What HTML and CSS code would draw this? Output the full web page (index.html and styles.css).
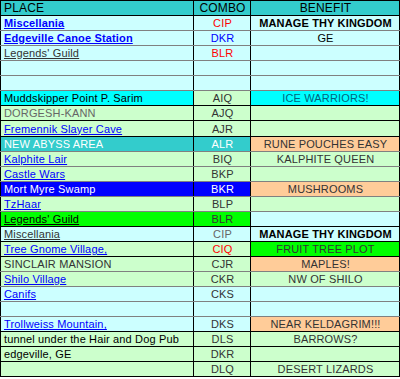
FILE: index.html
```html
<!DOCTYPE html>
<html>
<head>
<meta charset="utf-8">
<link rel="stylesheet" href="styles.css">
</head>
<body>
<table class="sheet">
  <colgroup><col class="c-place"><col class="c-combo"><col class="c-benefit"></colgroup>
  <tr class="hdr bk"><td class="place">PLACE</td><td class="combo">COMBO</td><td class="benefit">BENEFIT</td></tr>
  <tr class="cy gr"><td class="place"><span class="lnk b">Miscellania</span></td><td class="combo red">CIP</td><td class="benefit b dark">MANAGE THY KINGDOM</td></tr>
  <tr class="cy gr"><td class="place"><span class="lnk b">Edgeville Canoe Station</span></td><td class="combo blue">DKR</td><td class="benefit dark">GE</td></tr>
  <tr class="cy gr"><td class="place"><span class="ul">Legends' Guild</span></td><td class="combo red">BLR</td><td class="benefit"></td></tr>
  <tr class="cy gr"><td class="place"></td><td class="combo"></td><td class="benefit"></td></tr>
  <tr class="cy gr"><td class="place"></td><td class="combo"></td><td class="benefit"></td></tr>
  <tr class="gn bk"><td class="place aq dark">Muddskipper Point P. Sarim</td><td class="combo">AIQ</td><td class="benefit aq teal">ICE WARRIORS!</td></tr>
  <tr class="gn bk"><td class="place mid">DORGESH-KANN</td><td class="combo">AJQ</td><td class="benefit"></td></tr>
  <tr class="gn bk tall"><td class="place"><span class="lnk">Fremennik Slayer Cave</span></td><td class="combo">AJR</td><td class="benefit"></td></tr>
  <tr class="gn gr"><td class="place tl wt">NEW ABYSS AREA</td><td class="combo tl wt">ALR</td><td class="benefit or">RUNE POUCHES EASY</td></tr>
  <tr class="gn gr"><td class="place"><span class="lnk">Kalphite Lair</span></td><td class="combo">BIQ</td><td class="benefit">KALPHITE QUEEN</td></tr>
  <tr class="gn gr"><td class="place"><span class="lnk">Castle Wars</span></td><td class="combo">BKP</td><td class="benefit"></td></tr>
  <tr class="gn gr"><td class="place bl wt">Mort Myre Swamp</td><td class="combo bl wt">BKR</td><td class="benefit or">MUSHROOMS</td></tr>
  <tr class="gn gr"><td class="place"><span class="lnk">TzHaar</span></td><td class="combo">BLP</td><td class="benefit"></td></tr>
  <tr class="gn bk"><td class="place lg"><span class="ul dark">Legends' Guild</span></td><td class="combo lg">BLR</td><td class="benefit lc"></td></tr>
  <tr class="cy bk"><td class="place"><span class="ul">Miscellania</span></td><td class="combo mid">CIP</td><td class="benefit b dark">MANAGE THY KINGDOM</td></tr>
  <tr class="gn bk"><td class="place"><span class="lnk">Tree Gnome Village,</span></td><td class="combo red">CIQ</td><td class="benefit lg">FRUIT TREE PLOT</td></tr>
  <tr class="gn gr"><td class="place">SINCLAIR MANSION</td><td class="combo">CJR</td><td class="benefit or">MAPLES!</td></tr>
  <tr class="gn gr"><td class="place"><span class="lnk">Shilo Village</span></td><td class="combo">CKR</td><td class="benefit">NW OF SHILO</td></tr>
  <tr class="cy gr"><td class="place"><span class="lnk">Canifs</span></td><td class="combo">CKS</td><td class="benefit"></td></tr>
  <tr class="cy gr"><td class="place"></td><td class="combo"></td><td class="benefit"></td></tr>
  <tr class="cy bk"><td class="place"><span class="lnk">Trollweiss Mountain,</span></td><td class="combo">DKS</td><td class="benefit or">NEAR KELDAGRIM!!!</td></tr>
  <tr class="gn bk"><td class="place dark">tunnel under the Hair and Dog Pub</td><td class="combo">DLS</td><td class="benefit">BARROWS?</td></tr>
  <tr class="gn bk"><td class="place dark">edgeville, GE</td><td class="combo">DKR</td><td class="benefit"></td></tr>
  <tr class="gn bk"><td class="place"></td><td class="combo">DLQ</td><td class="benefit">DESERT LIZARDS</td></tr>
</table>
</body>
</html>
```
FILE: styles.css
```css
html, body {
  margin: 0;
  padding: 0;
  background: #ffffff;
}
.sheet {
  border-collapse: collapse;
  table-layout: fixed;
  width: 399px;
  font-family: "Liberation Sans", Arial, sans-serif;
  font-size: 11px;
  letter-spacing: 0.15px;
  color: #333333;
}
.c-place { width: 193px; }
.c-combo { width: 57px; }
.c-benefit { width: 149px; }
.sheet td {
  height: 14px;
  padding: 0 2px 0 3px;
  line-height: 14px;
  white-space: nowrap;
  overflow: hidden;
  border-left: 1px solid #000000;
  border-right: 1px solid #000000;
  vertical-align: middle;
}
.sheet tr.tall td { height: 15px; }
.sheet tr:first-child td { border-top: 1px solid #000000; }
.combo, .benefit { text-align: center; }
.hdr td { background: #33cccc; color: #000000; font-size: 12px; }
.cy td { background: #ccffff; }
.gn td { background: #ccffcc; }
.bk td { border-bottom: 1px solid #000000; }
.gr td { border-bottom: 1px solid #808080; }
.sheet td.aq { background: #00ffff; }
.sheet td.tl { background: #33cccc; }
.sheet td.bl { background: #0000ff; }
.sheet td.lg { background: #00ff00; }
.sheet td.lc { background: #ccffff; }
.sheet td.or { background: #ffcc99; }
.wt { color: #ffffff; }
.red { color: #ff0000; }
.blue { color: #0000ff; }
.dark { color: #000000; }
.mid { color: #666666; }
.teal { color: #006680; }
.b { font-weight: bold; }
.lnk { color: #0000ff; text-decoration: underline; }
.ul { text-decoration: underline; }
```
